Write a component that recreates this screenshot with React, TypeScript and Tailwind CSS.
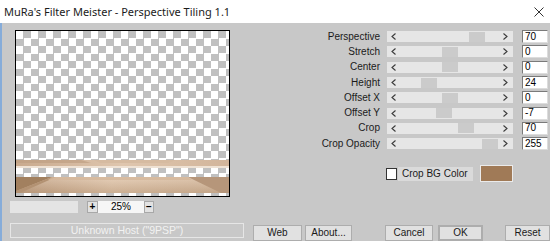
import React from "react";

const rows = [
  { label: "Perspective", value: "70", thumb: 82 },
  { label: "Stretch", value: "0", thumb: 55 },
  { label: "Center", value: "0", thumb: 55 },
  { label: "Height", value: "24", thumb: 34 },
  { label: "Offset X", value: "0", thumb: 55 },
  { label: "Offset Y", value: "-7", thumb: 49 },
  { label: "Crop", value: "70", thumb: 71 },
  { label: "Crop Opacity", value: "255", thumb: 95 },
];

function Chevron({ dir }: { dir: "left" | "right" }) {
  return (
    <svg width="5" height="7" viewBox="0 0 5 7" className="shrink-0">
      <path
        d={dir === "left" ? "M4.5 0.5 L1 3.5 L4.5 6.5" : "M0.5 0.5 L4 3.5 L0.5 6.5"}
        fill="none"
        stroke="#3a3a3a"
        strokeWidth="1.1"
      />
    </svg>
  );
}

function SliderRow({ label, value, thumb }: { label: string; value: string; thumb: number }) {
  return (
    <div className="flex h-[15.3px] items-center">
      <div className="w-[132px] text-right text-[10px] leading-none text-[#1a1a1a]">{label}</div>
      <div className="ml-[7px] flex h-[11px] w-[126px] items-center bg-[#e6e6e6] pl-[4px] pr-[5px]">
        <Chevron dir="left" />
        <div className="shrink-0" style={{ width: thumb - 9 }} />
        <div className="h-[10px] w-[16px] shrink-0 bg-[#cbcbcb]" />
        <div className="flex-1" />
        <Chevron dir="right" />
      </div>
      <div className="ml-[9px] flex h-[13px] w-[26px] items-center border border-[#7a7a7a] border-r-[#dcdcdc] border-b-[#dcdcdc] bg-white pl-[2px] text-[10px] leading-none text-black">
        {value}
      </div>
    </div>
  );
}

function Floor() {
  return (
    <svg width="213" height="165" viewBox="0 0 213 165" className="block">
      <defs>
        <linearGradient id="b1" x1="0" x2="1" y1="0" y2="0">
          <stop offset="0" stopColor="#c9aa8e" />
          <stop offset="0.5" stopColor="#dfc6ae" />
          <stop offset="1" stopColor="#d2b59b" />
        </linearGradient>
        <linearGradient id="b2" x1="0" x2="1" y1="0" y2="0">
          <stop offset="0" stopColor="#c4a385" />
          <stop offset="0.45" stopColor="#e0c4a8" />
          <stop offset="1" stopColor="#d4b699" />
        </linearGradient>
        <linearGradient id="b2v" x1="0" x2="0" y1="0" y2="1">
          <stop offset="0" stopColor="#ffffff" stopOpacity="0.2" />
          <stop offset="1" stopColor="#7a5a3c" stopOpacity="0.2" />
        </linearGradient>
      </defs>
      <rect x="0" y="129" width="213" height="6" fill="url(#b1)" />
      <polygon points="0,129 65,129 75,132 0,132" fill="#bf9f83" opacity="0.7" />
      <polygon points="78,129 160,129 152,132 84,132" fill="#d6bba1" />
      <rect x="0" y="135" width="213" height="2" fill="#efe2d4" />
      <rect x="0" y="146" width="213" height="16" fill="url(#b2)" />
      <rect x="0" y="146" width="213" height="16" fill="url(#b2v)" />
      <polygon points="0,146 36,146 0,160" fill="#a2805f" />
      <polygon points="0,160 36,146 40,146 4,162 0,162" fill="#b39273" />
      <polygon points="172,146 213,146 213,162 205,162" fill="#b6967a" />
      <polygon points="36,146 172,146 176,149 32,149" fill="#d5b79a" opacity="0.8" />
    </svg>
  );
}

function Btn({ children, className = "" }: { children: React.ReactNode; className?: string }) {
  return (
    <div
      className={`flex h-[16px] shrink-0 items-center justify-center border border-[#adadad] bg-[#e1e1e1] text-[10px] leading-none text-[#1a1a1a] ${className}`}
    >
      {children}
    </div>
  );
}

export default function App() {
  return (
    <div
      className="flex h-[241px] w-[550px] flex-col overflow-hidden bg-white"
      style={{ fontFamily: '"Liberation Sans", Arial, sans-serif' }}
    >
      <div className="flex h-[23px] shrink-0 items-center justify-between pl-[4px] pr-[6px]">
        <span
          className="text-[11px] leading-none text-[#1b1b1b]"
          style={{ fontFamily: '"Noto Sans", "Open Sans", sans-serif' }}
        >
          MuRa's Filter Meister - Perspective Tiling 1.1
        </span>
        <svg width="10" height="10" viewBox="0 0 10 10">
          <path d="M0.5 0.5 L9.5 9.5 M9.5 0.5 L0.5 9.5" stroke="#333" strokeWidth="1" />
        </svg>
      </div>

      <div className="flex flex-1 flex-col border-l-[2px] border-[#86acd9] bg-[#c8c8c8]">
        <div className="flex h-[190px] shrink-0">
          <div className="flex w-[246px] shrink-0 flex-col">
            <div className="ml-[13px] mt-[7px] h-[167px] w-[215px] border border-black bg-[image:conic-gradient(#c0c0c0_25%,#ffffff_0_50%,#c0c0c0_0_75%,#ffffff_0)] bg-[length:15px_15px]">
              <Floor />
            </div>
            <div className="mt-[4px] flex h-[12px] items-center">
              <div className="ml-[8px] h-[12px] w-[68px] bg-[#e4e4e4]" />
              <div className="ml-[9px] flex h-[12px] w-[11px] items-center justify-center border border-[#a8a8a8] bg-[#e2e2e2] text-[10px] font-bold leading-none text-black">
                +
              </div>
              <div className="flex h-[12px] w-[46px] items-center justify-center bg-[#f6f6f6] text-[10px] leading-none text-black">
                25%
              </div>
              <div className="flex h-[12px] w-[10px] items-center justify-center border border-[#a8a8a8] bg-[#e2e2e2] text-[10px] font-bold leading-none text-black">
                −
              </div>
            </div>
          </div>

          <div className="flex w-[302px] shrink-0 flex-col pt-[6px]">
            {rows.map((r) => (
              <SliderRow key={r.label} label={r.label} value={r.value} thumb={r.thumb} />
            ))}
            <div className="mt-[14px] flex h-[17px] items-center">
              <div className="ml-[138px] h-[12px] w-[11px] border border-[#333] bg-white" />
              <div className="ml-[1px] flex h-[14px] w-[75px] items-center bg-[#dadada] pl-[4px] text-[10px] leading-none text-[#1a1a1a]">
                Crop BG Color
              </div>
              <div className="ml-[7px] h-[17px] w-[33px] border border-[#ebebeb] bg-[#a07a57]" />
            </div>
          </div>
        </div>

        <div className="mt-[10px] flex">
          <div className="ml-[8px] flex h-[15px] w-[234px] items-center justify-center border border-[#e6e6e6] text-[10.5px] leading-none text-[#f2f2f2]">
            Unknown Host ("9PSP")
          </div>
          <div className="mt-[2px] flex">
            <Btn className="ml-[9px] w-[49px]">Web</Btn>
            <Btn className="ml-[3px] w-[47px]">About...</Btn>
            <Btn className="ml-[33px] w-[48px]">Cancel</Btn>
            <Btn className="ml-[5px] w-[45px] border-[2px] border-[#3c7fb1]">OK</Btn>
            <Btn className="ml-[22px] w-[45px]">Reset</Btn>
          </div>
        </div>
      </div>
    </div>
  );
}
